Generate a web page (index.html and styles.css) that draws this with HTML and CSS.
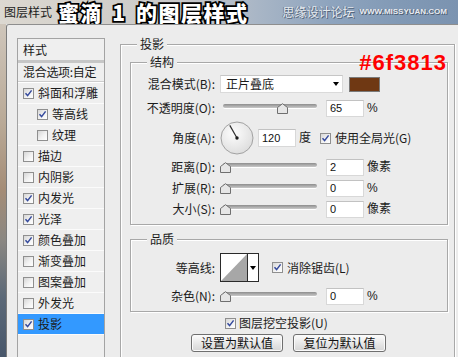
FILE: index.html
```html
<!DOCTYPE html>
<html lang="zh">
<head>
<meta charset="utf-8">
<title>图层样式</title>
<link rel="stylesheet" href="styles.css">
</head>
<body>
<div class="titlebar">
  <span class="t-small">图层样式</span>
  <span class="t-big">蜜滴 1 的图层样式</span>
  <span class="t-site">思缘设计论坛</span>
  <span class="t-url">WWW.MISSYUAN.COM</span>
</div>
<div class="main">
  <div class="edge"></div>
  <div class="dialog">
    <div class="list">
      <div class="lhead">样式</div>
      <div class="lsep-thick"></div>
      <div class="lblend">混合选项:自定</div>
      <div class="lsep"></div>
      <div class="li"><span class="cb"><svg viewBox="0 0 9 9"><path d="M1.5 4.3 3.6 6.6 7.6 1.4"/></svg></span>斜面和浮雕</div>
      <div class="li sub"><span class="cb"><svg viewBox="0 0 9 9"><path d="M1.5 4.3 3.6 6.6 7.6 1.4"/></svg></span>等高线</div>
      <div class="li sub"><span class="cb"></span>纹理</div>
      <div class="li"><span class="cb"></span>描边</div>
      <div class="li"><span class="cb"></span>内阴影</div>
      <div class="li"><span class="cb"><svg viewBox="0 0 9 9"><path d="M1.5 4.3 3.6 6.6 7.6 1.4"/></svg></span>内发光</div>
      <div class="li"><span class="cb"><svg viewBox="0 0 9 9"><path d="M1.5 4.3 3.6 6.6 7.6 1.4"/></svg></span>光泽</div>
      <div class="li"><span class="cb"><svg viewBox="0 0 9 9"><path d="M1.5 4.3 3.6 6.6 7.6 1.4"/></svg></span>颜色叠加</div>
      <div class="li"><span class="cb"></span>渐变叠加</div>
      <div class="li"><span class="cb"></span>图案叠加</div>
      <div class="li"><span class="cb"></span>外发光</div>
      <div class="li sel"><span class="cb"><svg viewBox="0 0 9 9"><path d="M1.5 4.3 3.6 6.6 7.6 1.4"/></svg></span>投影</div>
    </div>
    <div class="panel">
      <div class="outer">
        <div class="legend lg-outer">投影</div>
        <div class="group struct">
          <div class="legend lg-inner">结构</div>
          <div class="hex">#6f3813</div>
          <div class="frow r1">
            <span class="lbl">混合模式(B):</span>
            <span class="select">正片叠底<i class="arrow"></i></span>
            <span class="swatch"></span>
          </div>
          <div class="frow r2">
            <span class="lbl">不透明度(O):</span>
            <span class="slider"><span class="track"></span><svg class="thumb" style="left:57px" viewBox="0 0 11 11"><path d="M0.5 4.5 5.5 0.7 10.5 4.5 10.5 10.5 0.5 10.5Z"/></svg></span>
            <span class="num">65</span>
            <span class="unit">%</span>
          </div>
          <div class="frow r3">
            <span class="lbl">角度(A):</span>
            <svg class="dial" width="34" height="34" viewBox="0 0 34 34">
              <defs><radialGradient id="dg" cx="40%" cy="35%" r="70%"><stop offset="0" stop-color="#fdfdfd"/><stop offset="1" stop-color="#dcdcdc"/></radialGradient></defs>
              <circle cx="17" cy="17" r="16" fill="url(#dg)" stroke="#a2a2a2"/>
              <line x1="17" y1="17" x2="9.8" y2="4.4" stroke="#2e2e2e" stroke-width="1.2"/>
              <circle cx="17" cy="17" r="1.7" fill="#1e1e1e"/>
            </svg>
            <span class="num num-angle">120</span>
            <span class="unit">度</span>
            <span class="cb cb-global"><svg viewBox="0 0 9 9"><path d="M1.5 4.3 3.6 6.6 7.6 1.4"/></svg></span>
            <span class="cbtext">使用全局光(G)</span>
          </div>
          <div class="frow r4">
            <span class="lbl">距离(D):</span>
            <span class="slider"><span class="track"></span><svg class="thumb" style="left:0px" viewBox="0 0 11 11"><path d="M0.5 4.5 5.5 0.7 10.5 4.5 10.5 10.5 0.5 10.5Z"/></svg></span>
            <span class="num">2</span>
            <span class="unit">像素</span>
          </div>
          <div class="frow r5">
            <span class="lbl">扩展(R):</span>
            <span class="slider"><span class="track"></span><svg class="thumb" style="left:0px" viewBox="0 0 11 11"><path d="M0.5 4.5 5.5 0.7 10.5 4.5 10.5 10.5 0.5 10.5Z"/></svg></span>
            <span class="num">0</span>
            <span class="unit">%</span>
          </div>
          <div class="frow r5">
            <span class="lbl">大小(S):</span>
            <span class="slider"><span class="track"></span><svg class="thumb" style="left:0px" viewBox="0 0 11 11"><path d="M0.5 4.5 5.5 0.7 10.5 4.5 10.5 10.5 0.5 10.5Z"/></svg></span>
            <span class="num">0</span>
            <span class="unit">像素</span>
          </div>
        </div>
        <div class="group quality">
          <div class="legend lg-inner">品质</div>
          <div class="frow q1">
            <span class="lbl">等高线:</span>
            <span class="contour">
              <svg class="cprev" width="26" height="27" viewBox="0 0 26 27"><polygon points="0,27 26,0 26,27" fill="#a7a7a7"/></svg>
              <span class="cdrop"><i class="arrow"></i></span>
            </span>
            <span class="cb cb-anti"><svg viewBox="0 0 9 9"><path d="M1.5 4.3 3.6 6.6 7.6 1.4"/></svg></span>
            <span class="cbtext">消除锯齿(L)</span>
          </div>
          <div class="frow q2">
            <span class="lbl">杂色(N):</span>
            <span class="slider"><span class="track"></span><svg class="thumb" style="left:0px" viewBox="0 0 11 11"><path d="M0.5 4.5 5.5 0.7 10.5 4.5 10.5 10.5 0.5 10.5Z"/></svg></span>
            <span class="num">0</span>
            <span class="unit">%</span>
          </div>
        </div>
        <div class="knock">
          <span class="cb"><svg viewBox="0 0 9 9"><path d="M1.5 4.3 3.6 6.6 7.6 1.4"/></svg></span>
          <span class="cbtext">图层挖空投影(U)</span>
        </div>
        <div class="btns">
          <span class="btn">设置为默认值</span>
          <span class="btn btn2">复位为默认值</span>
        </div>
      </div>
    </div>
  </div>
</div>
</body>
</html>
```

FILE: styles.css
```css
* { box-sizing: border-box; }
html, body { margin: 0; padding: 0; }
body {
  width: 458px;
  height: 357px;
  overflow: hidden;
  background: #ececec;
  font-family: "Noto Sans CJK SC", "Noto Sans", sans-serif;
  font-size: 12px;
  line-height: 14px;
  color: #1b1b1b;
}

/* ---------- title bar ---------- */
.titlebar {
  height: 24px;
  display: flex;
  align-items: center;
  white-space: nowrap;
  background: linear-gradient(90deg, #dcd8d1 0%, #d4d1cb 18%, #c7c8ca 40%, #a9b6c6 56%, #8ea4be 72%, #8199b5 88%, #7b93b0 100%);
}
.t-small { margin-left: 4px; font-size: 12px; color: #1c1c1c; }
.t-big {
  margin-left: 6px;
  font-size: 21px;
  line-height: 24px;
  font-weight: 900;
  color: #fff;
  -webkit-text-stroke: 3.5px #000;
  paint-order: stroke fill;
  letter-spacing: 1.5px;
  word-spacing: 3px;
}
.t-site {
  margin-left: auto;
  font-size: 12px;
  color: #e4e9ef;
  text-shadow: 1px 1px 0 #55667c, -1px 0 0 #6e7f95;
}
.t-url {
  margin-left: 5px;
  margin-right: 11px;
  font-family: "Liberation Sans", sans-serif;
  font-size: 8px;
  font-weight: bold;
  color: #e8ecf2;
  text-shadow: 1px 1px 0 #4f5f74, -1px 0 0 #66778c;
}

/* ---------- main frame ---------- */
.main { display: flex; height: 333px; }
.edge {
  width: 6px;
  flex: none;
  background: linear-gradient(#cfc6bb 0%, #b9a996 30%, #a48c76 50%, #8a8782 65%, #5c6978 82%, #47566a 100%);
}
.dialog {
  flex: 1;
  display: flex;
  background: #ececec;
  border-top: 1px solid #8e8e8e;
  border-left: 1px solid #7b7b7b;
  border-top-left-radius: 3px;
  padding: 13px 0 0 10px;
}

/* ---------- style list ---------- */
.list {
  width: 88px;
  flex: none;
  display: flex;
  flex-direction: column;
  background: #efefef;
  border: 1px solid #a3a3a3;
  border-bottom: 0;
}
.lhead { height: 21px; padding-left: 5px; display: flex; align-items: center; }
.lsep-thick { height: 3px; background: #c6c6c6; }
.lblend { height: 18px; padding-left: 5px; display: flex; align-items: center; letter-spacing: -0.3px; }
.lsep { height: 2px; background: #cdcdcd; border-bottom: 1px solid #fff; }
.li {
  height: 21px;
  display: flex;
  align-items: center;
  padding-left: 5px;
  border-bottom: 1px solid #fbfbfb;
}
.li .cb { margin-right: 4px; }
.li.sub { padding-left: 19px; }
.li.sel { background: #3399ff; }

/* ---------- checkbox ---------- */
.cb {
  display: inline-flex;
  align-items: center;
  justify-content: center;
  flex: none;
  width: 11px;
  height: 11px;
  border: 1px solid #8f8f8f;
  background: linear-gradient(135deg, #d6d6d6 0%, #f2f2f2 55%, #ffffff 100%);
}
.cb svg { width: 9px; height: 9px; display: block; }
.cb path { fill: none; stroke: #34499c; stroke-width: 1.5; }
.cbtext { margin-left: 4px; }

/* ---------- right panel ---------- */
.panel {
  margin-left: 15px;
  padding-top: 6px;
  display: flex;
  flex-direction: column;
}
.outer {
  flex: 1;
  width: 335px;
  display: flex;
  flex-direction: column;
  padding: 0 6px 0 9px;
  border: 1px solid #a8a8a8;
  border-bottom: 0;
  box-shadow: inset 1px 1px 0 #fff, 1px 0 0 #fff;
}
.legend {
  align-self: flex-start;
  margin-top: -8px;
  padding: 0 3px;
  background: #ececec;
  line-height: 14px;
}
.lg-outer { margin-left: 7px; }
.lg-inner { margin-left: 16px; }

.group {
  display: flex;
  flex-direction: column;
  border: 1px solid #a8a8a8;
  box-shadow: inset 1px 1px 0 #fff, 1px 1px 0 #fff;
}
.struct { position: relative; margin-top: 11px; padding-bottom: 6px; }
.quality { margin-top: 14px; padding-bottom: 6px; }

.hex {
  position: absolute;
  right: 0;
  top: -11px;
  font-family: "Liberation Sans", Arial, sans-serif;
  font-weight: bold;
  font-size: 22px;
  line-height: 22px;
  letter-spacing: 1px;
  color: #ff0000;
}

.frow { display: flex; align-items: center; height: 18px; }
.r1 { margin-top: 6px; }
.r2 { margin-top: 6px; }
.r3 { margin-top: 4px; height: 34px; }
.r4, .r5 { margin-top: 3px; }
.q1 { margin-top: 7px; height: 29px; }
.q2 { margin-top: 5px; }

.lbl { width: 84px; flex: none; margin-right: 5px; text-align: right; white-space: nowrap; }

.select {
  width: 123px;
  height: 18px;
  display: flex;
  align-items: center;
  padding-left: 5px;
  background: #fff;
  border: 1px solid #dadada;
  border-top-color: #c6c6c6;
}
.arrow {
  display: block;
  width: 0;
  height: 0;
  border-left: 3px solid transparent;
  border-right: 3px solid transparent;
  border-top: 4px solid #000;
}
.select .arrow { margin-left: auto; margin-right: 3px; }
.swatch {
  width: 31px;
  height: 15px;
  margin-left: 6px;
  background: #6f3813;
  border: 1px solid #7a7a7a;
}

.slider { position: relative; width: 100px; height: 18px; flex: none; }
.track {
  position: absolute;
  left: 3px;
  right: 3px;
  top: 5px;
  height: 4px;
  border-radius: 2px;
  background: linear-gradient(#8d8d8d, #c9c9c9);
  box-shadow: 0 1px 0 #fff;
}
.thumb { position: absolute; top: 4px; width: 11px; height: 11px; }
.thumb path { fill: #e6e6e6; stroke: #6f6f6f; stroke-width: 1; }

.num {
  width: 38px;
  height: 17px;
  margin-left: 6px;
  display: flex;
  align-items: center;
  padding-left: 3px;
  background: #fff;
  border: 1px solid #d8d8d8;
  border-top-color: #c2c2c2;
  font-family: "Liberation Sans", Arial, sans-serif;
  font-size: 11px;
  color: #111;
}
.unit { margin-left: 3px; font-family: "Liberation Sans", "Noto Sans CJK SC", sans-serif; }

.dial { flex: none; display: block; }
.num-angle { margin-left: 4px; height: 18px; }
.cb-global { margin-left: 9px; }

.contour {
  display: flex;
  width: 39px;
  height: 29px;
  flex: none;
  background: #fff;
  border: 1px solid #2a2a2a;
}
.cprev { display: block; flex: none; }
.cdrop {
  flex: 1;
  display: flex;
  align-items: center;
  justify-content: center;
  border-left: 1px solid #2a2a2a;
}
.cb-anti { margin-left: 13px; }

.knock {
  display: flex;
  align-items: center;
  height: 14px;
  margin-top: 4px;
  padding-left: 95px;
}
.knock .cbtext { margin-left: 3px; }

.btns { display: flex; gap: 10px; margin-top: 4px; padding-left: 61px; }
.btn {
  width: 92px;
  height: 18px;
  display: flex;
  align-items: center;
  justify-content: center;
  background: linear-gradient(#fcfcfc, #e4e4e4 60%, #d6d6d6);
  border: 1px solid #6f6f6f;
  border-radius: 3px;
  box-shadow: inset 0 0 0 1px #fafafa;
  color: #111;
}
.btn2 { width: 93px; }
```
